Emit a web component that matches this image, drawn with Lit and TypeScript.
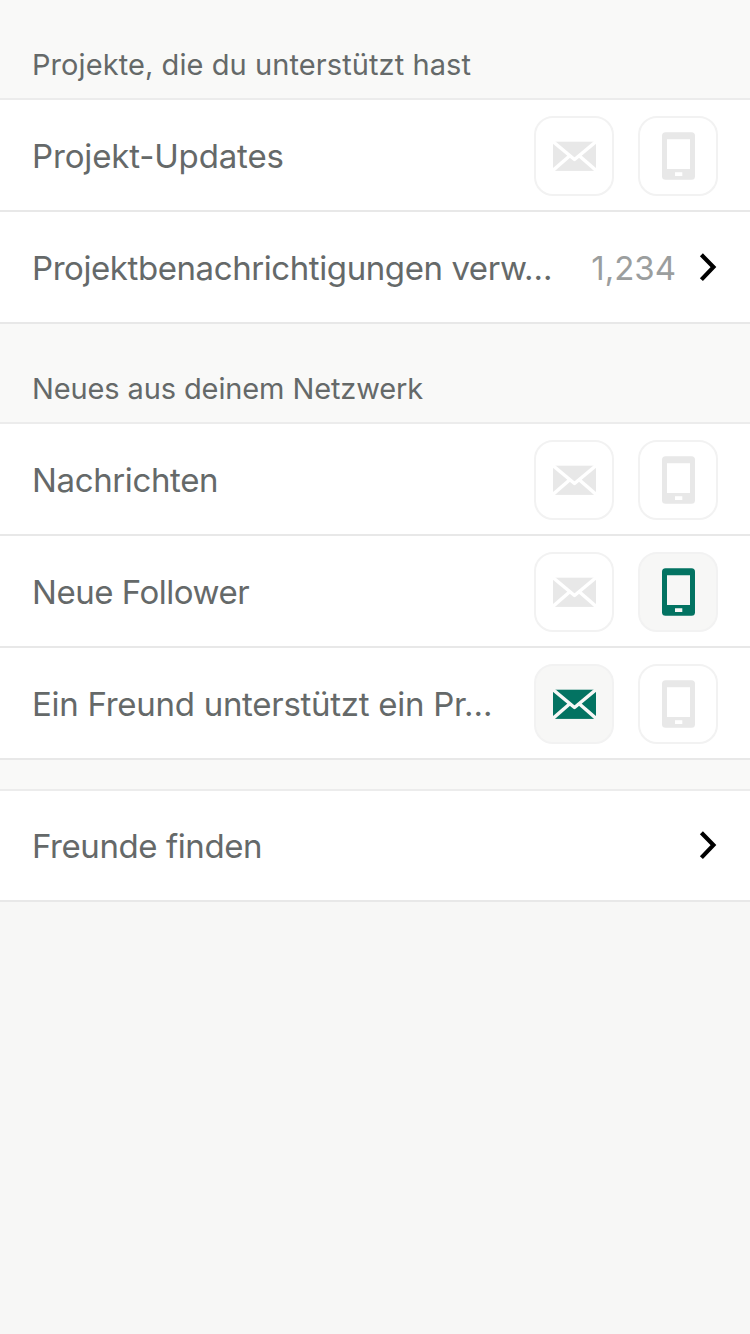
import { LitElement, html, css, svg, nothing } from "lit";
import { customElement, property } from "lit/decorators.js";
import { styleMap } from "lit/directives/style-map.js";

@customElement("toggle-button")
class ToggleButton extends LitElement {
  @property() icon = "mail";
  @property({ type: Boolean, reflect: true }) active = false;

  static styles = css`
    :host {
      display: block;
      flex: none;
      width: 80px;
      height: 80px;
      box-sizing: border-box;
      border: 2px solid #f2f2f2;
      border-radius: 19px;
      background: #fff;
      color: #e8e8e8;
      --hole: #fff;
    }
    :host([active]) {
      background: #f7f7f6;
      color: #037362;
      --hole: #f7f7f6;
    }
    svg {
      display: block;
      width: 76px;
      height: 76px;
    }
    .fill {
      fill: currentColor;
    }
    .line {
      fill: none;
      stroke: var(--hole);
      stroke-width: 3.4;
      stroke-linejoin: round;
    }
    .hole {
      fill: var(--hole);
    }
  `;

  render() {
    const mail = svg`
      <rect class="fill" x="17" y="23.7" width="43" height="29.2"/>
      <path class="line" d="M15.5 22.4L38.5 41.5L61.5 22.4M15.5 53.6L33.5 38M61.5 53.6L43.5 38"/>`;
    const phone = svg`
      <rect class="fill" x="22" y="14.3" width="33" height="47.4" rx="3.5"/>
      <path class="hole" d="M27 21.3h23v29.7h-23zM35 54.3h7.3v3.7h-7.3z"/>`;
    return html`<svg viewBox="0 0 76 76">${this.icon === "mail" ? mail : phone}</svg>`;
  }
}

@customElement("settings-row")
class SettingsRow extends LitElement {
  @property() label = "";
  @property() value = "";
  @property() kind = "toggles";
  @property({ type: Number }) tracking = 0;
  @property({ type: Boolean }) mail = false;
  @property({ type: Boolean }) phone = false;

  static styles = css`
    :host {
      display: flex;
      align-items: center;
      height: 112px;
      box-sizing: border-box;
      padding: 2px 32px 0;
      background: #fff;
      border-bottom: 2px solid #e8e8e8;
    }
    .label {
      flex: 1;
      white-space: nowrap;
      font-size: 33px;
      line-height: 42px;
      color: #656969;
    }
    .value {
      font-size: 33px;
      line-height: 42px;
      color: #9b9e9e;
      margin-right: 23px;
    }
    .toggles {
      display: flex;
      gap: 24px;
    }
    .chevron {
      width: 19px;
      height: 30px;
      margin-bottom: 2px;
      fill: none;
      stroke: #000;
      stroke-width: 4.2;
    }
  `;

  render() {
    return html`
      <span class="label" style=${styleMap({ letterSpacing: `${this.tracking}px` })}>${this.label}</span>
      ${this.value ? html`<span class="value">${this.value}</span>` : nothing}
      ${this.kind === "link"
        ? html`<svg class="chevron" viewBox="0 0 19 30"><path d="M2.4 2.8L14.4 15.1L2.4 27.6"/></svg>`
        : html`<div class="toggles">
            <toggle-button icon="mail" ?active=${this.mail}></toggle-button>
            <toggle-button icon="phone" ?active=${this.phone}></toggle-button>
          </div>`}
    `;
  }
}

@customElement("app-root")
class AppRoot extends LitElement {
  static styles = css`
    :host {
      display: block;
      min-height: 1334px;
      background: #f7f7f6;
      font-family: Inter, "Liberation Sans", sans-serif;
    }
    .heading {
      box-sizing: border-box;
      height: 100px;
      padding: 46px 32px 0;
      border-bottom: 2px solid #ececec;
      font-size: 29px;
      line-height: 38px;
      letter-spacing: 0.08px;
      color: #656969;
      background: #f9f9f8;
    }
    .network {
      letter-spacing: -0.12px;
    }
    .gap {
      box-sizing: border-box;
      height: 31px;
      border-bottom: 2px solid #ececec;
      background: #f9f9f8;
    }
    .last {
      height: 111px;
      padding-top: 1px;
    }
  `;

  render() {
    return html`
      <div class="heading">Projekte, die du unterstützt hast</div>
      <settings-row label="Projekt-Updates" tracking="-0.15"></settings-row>
      <settings-row label="Projektbenachrichtigungen verw…" tracking="-0.42" value="1,234" kind="link"></settings-row>
      <div class="heading network">Neues aus deinem Netzwerk</div>
      <settings-row label="Nachrichten" tracking="-0.37"></settings-row>
      <settings-row label="Neue Follower" tracking="-0.48" phone></settings-row>
      <settings-row label="Ein Freund unterstützt ein Pr…" tracking="-0.28" mail></settings-row>
      <div class="gap"></div>
      <settings-row class="last" label="Freunde finden" tracking="-0.42" kind="link"></settings-row>
    `;
  }
}
